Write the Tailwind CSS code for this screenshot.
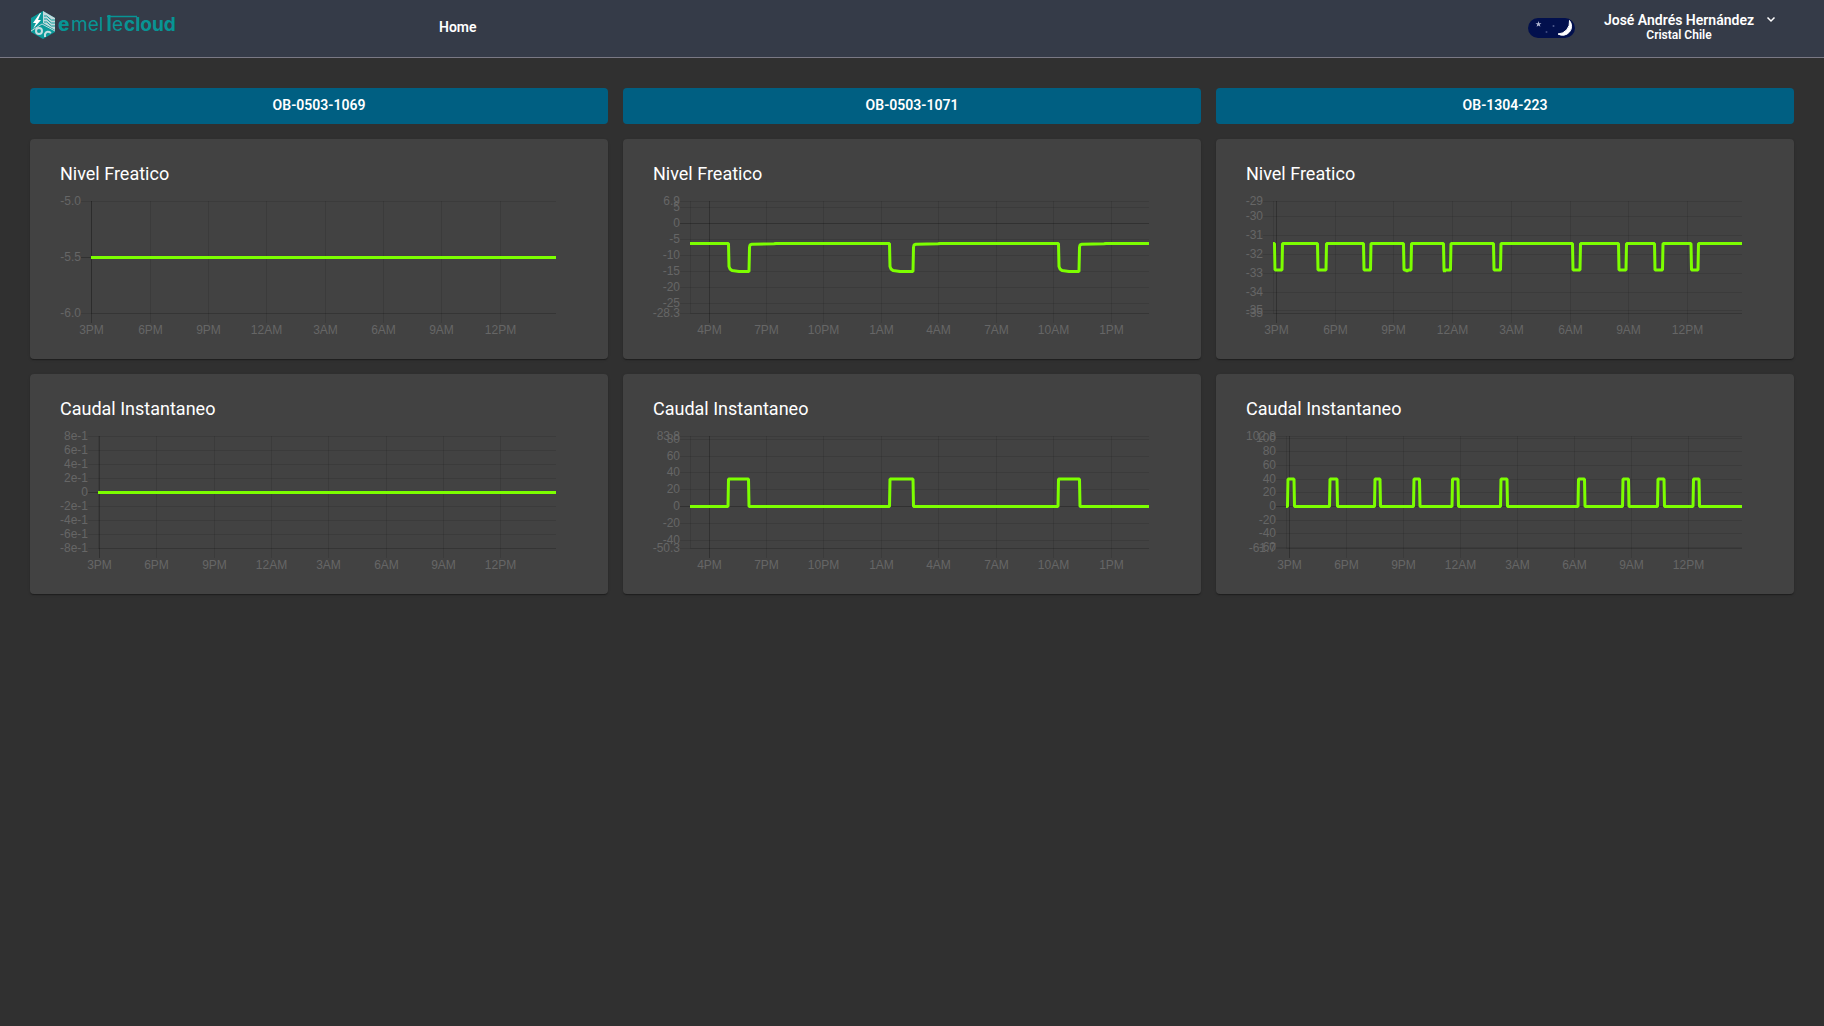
<!DOCTYPE html>
<html lang="es">
<head>
<meta charset="utf-8">
<title>emeltecloud</title>
<script src="https://cdn.jsdelivr.net/npm/@tailwindcss/browser@4"></script>
</head>
<body class="min-h-screen bg-[#303030] font-['Roboto',sans-serif] text-white">
<header class="flex h-[58px] items-start border-b border-[#7a7985] bg-[#353b48]">
  <a href="#" aria-label="emeltecloud" class="ml-[30px] mt-[10px] block">
    <svg class="block" width="149" height="32" viewBox="0 0 149 32">
      <path d="M13 1 L25 8 V22 L13 29 L1 22 V8 Z" fill="#0c9a9a"/>
      <path d="M13 1 L25 8 V20 L13 13 Z" fill="#c3dadd"/>
      <path d="M14 6 Q17 5 19 8 T25 10 M14 9 Q17 8 19 11 T25 13 M14 12 Q17 11 19 14 T25 16" stroke="#0c9a9a" stroke-width="1" fill="none"/>
      <path d="M1 21 L12 14 L25 21" stroke="#c3dadd" stroke-width="1" fill="none"/>
      <path d="M10 3 L3 13 H6 L3 19 L11 10 H8 L11 3 Z" fill="#fff"/>
      <circle cx="9" cy="21" r="3" fill="none" stroke="#c5dde0" stroke-width="2"/>
      <path d="M15 27 V24 Q17 20 21 23" fill="none" stroke="#c5dde0" stroke-width="2"/>
      <g fill="#079494" font-family="Inter" font-size="19">
        <text x="28" y="21" font-weight="800">e</text>
        <text x="41" y="21" font-weight="400">mel</text>
        <text x="82" y="21" font-weight="400">e</text>
        <text x="94" y="21" font-weight="700">cloud</text>
      </g>
      <path d="M77 6.500 H107" stroke="#079494" stroke-width="1.500"/>
      <path d="M79 5 V21" stroke="#079494" stroke-width="3"/>
    </svg>
  </a>
  <nav class="ml-[260px] mt-[17px]"><a href="#" class="block text-sm leading-5 font-semibold">Home</a></nav>
  <button type="button" aria-label="Modo oscuro" class="mt-[17px] ml-auto block">
    <svg class="block" width="48" height="21" viewBox="0 0 48 21">
      <rect x="0" y="1" width="47" height="20" rx="10" fill="#02104d"/>
      <path d="M41.500 3.500 A9 9 0 0 1 30 17 A12 12 0 0 0 41.500 3.500 Z" fill="#fff" stroke="#fff" stroke-width="1"/>
      <path d="M10.500 4 L11.200 6.200 H13.500 L11.700 7.500 L12.400 9.700 L10.500 8.400 L8.600 9.700 L9.300 7.500 L7.500 6.200 H9.800 Z" fill="#b4bad4"/>
      <circle cx="25.500" cy="9" r="1" fill="#4e5a8c"/><circle cx="18.500" cy="15" r="1" fill="#3e4a80"/>
    </svg>
  </button>
  <button type="button" class="mt-[12px] mr-12 ml-7 flex items-start gap-3 text-center font-semibold">
    <span class="block">
      <span class="block text-sm leading-4">José Andrés Hernández</span>
      <span class="block text-xs leading-3.5">Cristal Chile</span>
    </span>
    <svg class="mt-1 block" width="10" height="8" viewBox="0 0 10 8"><path d="M1.500 1.500 L5 5 L8.500 1.500" fill="none" stroke="#fff" stroke-width="1.500"/></svg>
  </button>
</header>
<main id="board" class="grid grid-cols-3 gap-[15px] p-[30px]"></main>

<script>
const baseW = 518, right0 = 496;
const hoursA = ['3PM','6PM','9PM','12AM','3AM','6AM','9AM','12PM'];
const hoursB = ['4PM','7PM','10PM','1AM','4AM','7AM','10AM','1PM'];
const pulses = (left, list, rest, peak) => {
  const p = [[left, rest]];
  for (const [a, b, ...extra] of list) p.push([a - 0.5, rest], [a, peak], ...extra, [b, peak], [b + 0.5, rest]);
  p.push([right0, rest]);
  return p;
};
const dips = [[75,96],[236,260],[405,426]];
const wells = ['OB-0503-1069', 'OB-0503-1071', 'OB-1304-223'];
const levelB = [[37,56]];
for (const [a, b] of dips) levelB.push([a+0.5,56],[a+1,79],[a+2,81.5],[a+4,83],[a+11,84],[b,84],[b+0.5,60],[b+1,57.5],[b+3,56.7],[b+25,56.3],[b+27,56]);
levelB.push([right0,56]);
const charts = [
  { title: 'Nivel Freatico', left: 31, hours: hoursA, xs: [31,90,148,206,265,323,381,440],
    ys: [['-5.0',14],['-5.5',70],['-6.0',126]], dark: 70, line: [[31,70],[right0,70]] },
  { title: 'Nivel Freatico', left: 37, hours: hoursB, xs: [56,113,170,228,285,343,400,458],
    ys: [['6.9',14],['5',20],['0',36],['-5',52],['-10',68],['-15',84],['-20',100],['-25',116],['-28.3',126]], dark: 36, line: levelB },
  { title: 'Nivel Freatico', left: 27, hours: hoursA, xs: [30,89,147,206,265,324,382,441],
    ys: [['-29',14],['-30',29],['-31',48],['-32',67],['-33',86],['-34',105],['-35',123],['-35',126]], dark: -1,
    line: pulses(27, [[29,36],[72,80],[118,124.5],[158,165,[160,82.5],[161,84],[162,82.5]],[198,204.5,[198.5,84.5],[199,82.5]],[248,254.5],[327,334],[373,380],[409,416.5],[445.5,452]], 56, 82.5) },
  { title: 'Caudal Instantaneo', left: 38, hours: hoursA, xs: [39,96,154,211,268,326,383,440],
    ys: [['8e-1',14],['6e-1',28],['4e-1',42],['2e-1',56],['0',70],['-2e-1',84],['-4e-1',98],['-6e-1',112],['-8e-1',126]], dark: 70, line: [[38,70],[right0,70]] },
  { title: 'Caudal Instantaneo', left: 37, hours: hoursB, xs: [56,113,170,228,285,343,400,458],
    ys: [['83.8',14],['80',17],['60',34],['40',50],['20',67],['0',84],['-20',101],['-40',118],['-50.3',126]], dark: 84,
    line: pulses(37, [[75.5,95.5],[237,260],[405.5,426.5]], 84, 56.5) },
  { title: 'Caudal Instantaneo', left: 40, hours: hoursA, xs: [43,100,157,214,271,328,385,442],
    ys: [['102.8',14],['100',16],['80',29],['60',43],['40',57],['20',70],['0',84],['-20',98],['-40',111],['-60',125],['-61.7',126]], dark: 84,
    line: pulses(40, [[42,48],[84,91],[129,134],[168,173.5],[206.5,212],[255,261],[332.5,338.5],[377,382.5],[412,418],[447.5,453]], 84, 56.5) },
];

document.getElementById('board').innerHTML =
  wells.map(w => `<h2 class="rounded-[4px] bg-[#005f82] pt-[7px] pb-[9px] text-center text-sm leading-5 font-semibold">${w}</h2>`).join('') +
  charts.map(c => `<section class="min-w-0 rounded-[4px] bg-[#424242] px-[30px] pt-[21px] pb-[20px] shadow-[0_2px_1px_-1px_rgba(0,0,0,0.2),0_1px_1px_0_rgba(0,0,0,0.14),0_1px_3px_0_rgba(0,0,0,0.12)]">
    <h3 class="text-lg leading-[27px]">${c.title}</h3>
    <svg class="chart block h-[152px] w-full overflow-visible font-['Liberation_Sans',sans-serif] text-xs"></svg></section>`).join('');

function draw() {
  document.querySelectorAll('.chart').forEach((svg, i) => {
    const c = charts[i];
    const k = (svg.getBoundingClientRect().width - c.left) / (baseW - c.left);
    const X = v => c.left + (v - c.left) * k;
    const gx = v => Math.round(X(v)) + 0.5;
    const R = X(right0);
    const grid = (d, o) => `<path d="${d}" stroke="#000" stroke-opacity="${o}" fill="none"/>`;
    let s = '';
    c.ys.forEach(([t, y]) => {
      s += grid(`M${c.left - 10} ${y + 0.5}H${R}`, y === c.dark ? 0.25 : 0.1);
      s += `<text x="${c.left - 10}" y="${y + 4}" text-anchor="end" fill="#666">${t}</text>`;
    });
    s += grid(`M${c.left} 126.5H${R}`, 0.1) + grid(`M${c.left + 0.5} 14V126`, 0.1);
    c.xs.forEach((x, n) => {
      s += grid(`M${gx(x)} 14V136`, n ? 0.1 : 0.25);
      s += `<text x="${gx(x)}" y="147" text-anchor="middle" fill="#666">${c.hours[n]}</text>`;
    });
    s += `<polyline points="${c.line.map(([x, y]) => X(x) + ',' + (y + 0.5)).join(' ')}" fill="none" stroke="#7cff00" stroke-width="3" stroke-linejoin="bevel"/>`;
    svg.innerHTML = s;
  });
}
new ResizeObserver(draw).observe(document.querySelector('.chart'));
addEventListener('load', draw);
</script>
</body>
</html>
